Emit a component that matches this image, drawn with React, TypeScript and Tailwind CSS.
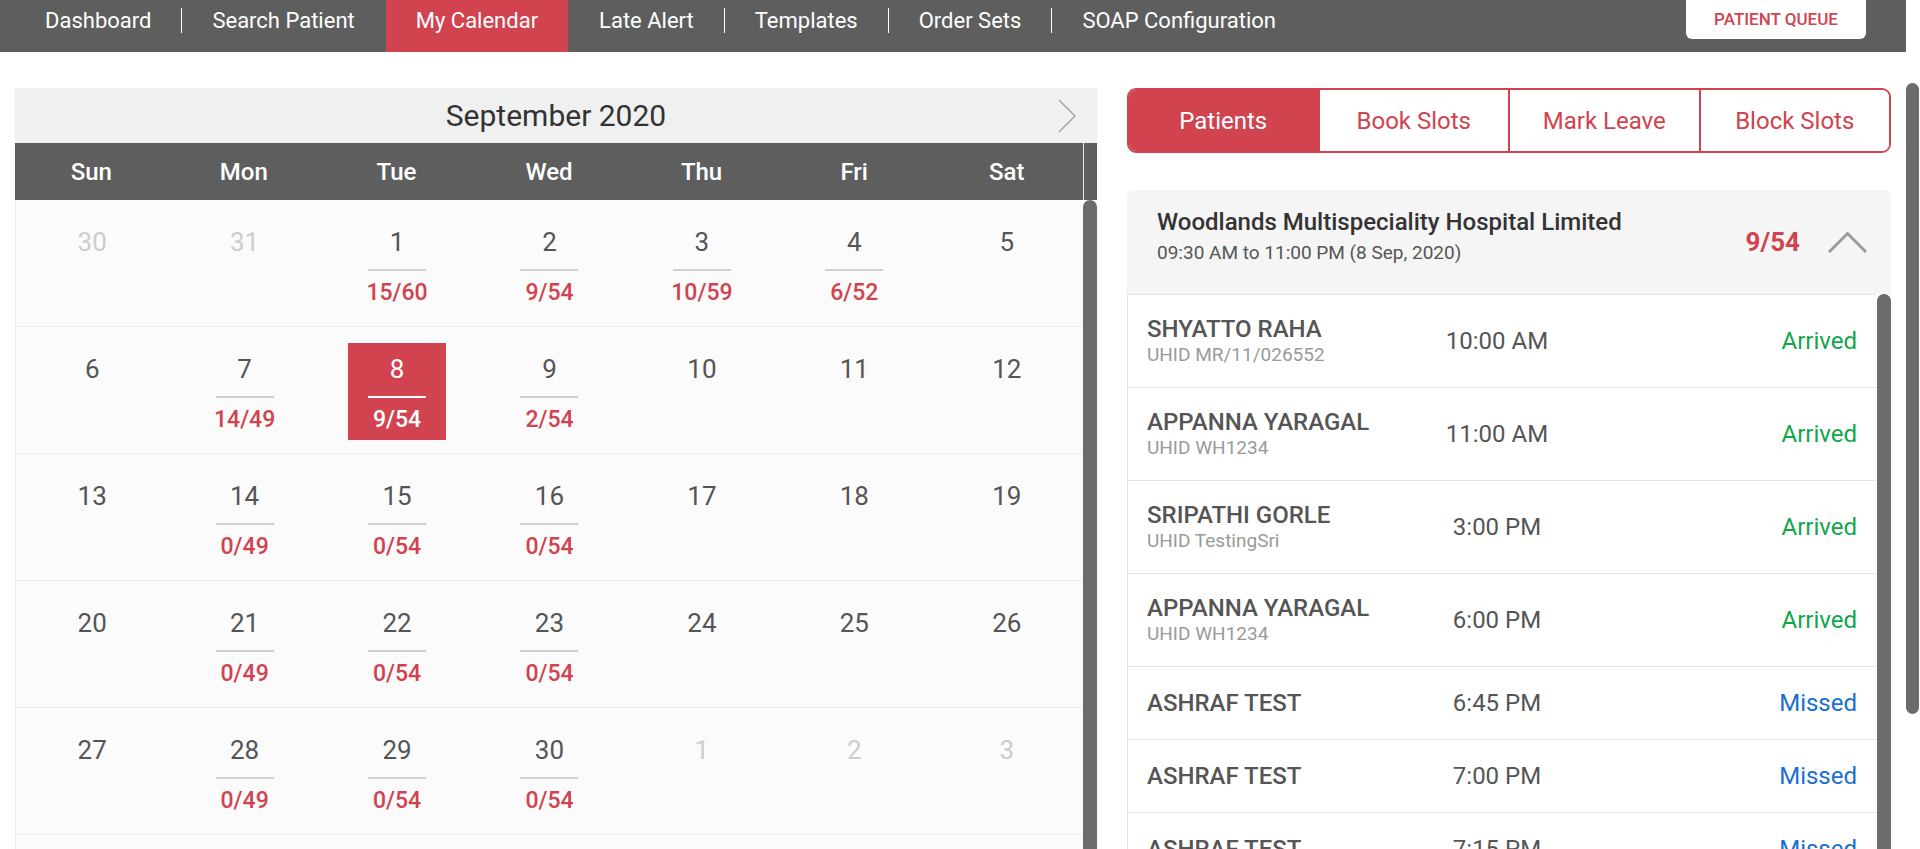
import React from "react";

type Day = { n: number; other?: boolean; count?: string; selected?: boolean };

const navItems = [
  "Dashboard",
  "Search Patient",
  "My Calendar",
  "Late Alert",
  "Templates",
  "Order Sets",
  "SOAP Configuration",
];

const weeks: Day[][] = [
  [
    { n: 30, other: true },
    { n: 31, other: true },
    { n: 1, count: "15/60" },
    { n: 2, count: "9/54" },
    { n: 3, count: "10/59" },
    { n: 4, count: "6/52" },
    { n: 5 },
  ],
  [
    { n: 6 },
    { n: 7, count: "14/49" },
    { n: 8, count: "9/54", selected: true },
    { n: 9, count: "2/54" },
    { n: 10 },
    { n: 11 },
    { n: 12 },
  ],
  [
    { n: 13 },
    { n: 14, count: "0/49" },
    { n: 15, count: "0/54" },
    { n: 16, count: "0/54" },
    { n: 17 },
    { n: 18 },
    { n: 19 },
  ],
  [
    { n: 20 },
    { n: 21, count: "0/49" },
    { n: 22, count: "0/54" },
    { n: 23, count: "0/54" },
    { n: 24 },
    { n: 25 },
    { n: 26 },
  ],
  [
    { n: 27 },
    { n: 28, count: "0/49" },
    { n: 29, count: "0/54" },
    { n: 30, count: "0/54" },
    { n: 1, other: true },
    { n: 2, other: true },
    { n: 3, other: true },
  ],
  [
    { n: 4, other: true },
    { n: 5, other: true },
    { n: 6, other: true },
    { n: 7, other: true },
    { n: 8, other: true },
    { n: 9, other: true },
    { n: 10, other: true },
  ],
];

const patients = [
  { name: "SHYATTO RAHA", uhid: "UHID MR/11/026552", time: "10:00 AM", status: "Arrived" },
  { name: "APPANNA YARAGAL", uhid: "UHID WH1234", time: "11:00 AM", status: "Arrived" },
  { name: "SRIPATHI GORLE", uhid: "UHID TestingSri", time: "3:00 PM", status: "Arrived" },
  { name: "APPANNA YARAGAL", uhid: "UHID WH1234", time: "6:00 PM", status: "Arrived" },
  { name: "ASHRAF TEST", time: "6:45 PM", status: "Missed" },
  { name: "ASHRAF TEST", time: "7:00 PM", status: "Missed" },
  { name: "ASHRAF TEST", time: "7:15 PM", status: "Missed" },
  { name: "ASHRAF TEST", time: "7:30 PM", status: "Missed" },
];

function TopNav() {
  const active = 2;
  return (
    <div className="flex h-[52px] shrink-0 items-stretch bg-[#5e5e5e] pl-[15px] pr-[40px]">
      {navItems.map((item, i) => (
        <React.Fragment key={item}>
          {i > 0 && (
            <div className="flex items-center pb-[12px]">
              <div
                className={
                  i === active || i === active + 1
                    ? "h-[25px] w-px bg-transparent"
                    : "h-[25px] w-px bg-white"
                }
              />
            </div>
          )}
          <div
            className={
              i === active
                ? "flex items-center bg-[#d0434f] px-[30px] pb-[12px] text-[22px] text-white"
                : "flex items-center px-[30px] pb-[12px] text-[22px] text-white"
            }
          >
            {item}
          </div>
        </React.Fragment>
      ))}
      <button className="ml-auto h-[39px] w-[180px] self-start rounded-b-md bg-white text-[17px] font-medium text-[#d0434f]">
        PATIENT QUEUE
      </button>
    </div>
  );
}

function Calendar() {
  return (
    <div className="flex w-[1082px] flex-col">
      <div className="grid h-[55px] grid-cols-[1fr_auto_1fr] items-center bg-[#eff0f0]">
        <div />
        <div className="text-[30px] text-[#333]">September 2020</div>
        <div className="flex justify-end pr-[21px]">
          <svg width="18" height="34" viewBox="0 0 18 34" fill="none">
            <polyline points="1,1 17,17 1,33" stroke="#9b9b9b" strokeWidth="1.2" />
          </svg>
        </div>
      </div>
      <div className="flex h-[57px] bg-[#5e5e5e]">
        <div className="grid flex-1 grid-cols-7 items-center">
          {["Sun", "Mon", "Tue", "Wed", "Thu", "Fri", "Sat"].map((d) => (
            <div key={d} className="text-center text-[24px] font-medium text-white">
              {d}
            </div>
          ))}
        </div>
        <div className="w-[14px] border-l border-[#e8e8e8]" />
      </div>
      <div className="flex">
        <div className="flex-1 border-l border-[#ececec] bg-[#fbfbfb]">
          {weeks.map((week, wi) => (
            <div key={wi} className="grid h-[127px] grid-cols-7 border-b border-[#ececec]">
              {week.map((day, di) => (
                <div key={di} className="flex flex-col items-center pt-4">
                  <div
                    className={
                      day.selected
                        ? "flex h-[97px] w-[98px] flex-col items-center bg-[#d0434f] pt-[10px]"
                        : "flex h-[97px] w-[98px] flex-col items-center pt-[10px]"
                    }
                  >
                    <div
                      className={
                        day.selected
                          ? "text-[26px] leading-[32px] text-white"
                          : day.other
                          ? "text-[26px] leading-[32px] text-[#cdcdcd]"
                          : "text-[26px] leading-[32px] text-[#555]"
                      }
                    >
                      {day.n}
                    </div>
                    {day.count && (
                      <>
                        <div
                          className={
                            day.selected
                              ? "mt-[11px] h-[2px] w-[58px] bg-white"
                              : "mt-[11px] h-[2px] w-[58px] bg-[#cfcfcf]"
                          }
                        />
                        <div
                          className={
                            day.selected
                              ? "mt-[8px] text-[23px] font-medium leading-[28px] text-white"
                              : "mt-[8px] text-[23px] font-medium leading-[28px] text-[#d0434f]"
                          }
                        >
                          {day.count}
                        </div>
                      </>
                    )}
                  </div>
                </div>
              ))}
            </div>
          ))}
        </div>
        <div className="w-[14px] rounded-t-full bg-[#6b6b6b]" />
      </div>
    </div>
  );
}

function PatientsPanel() {
  const tabs = ["Patients", "Book Slots", "Mark Leave", "Block Slots"];
  return (
    <div className="flex w-[764px] flex-col">
      <div className="flex h-[65px] overflow-hidden rounded-[9px] border-2 border-[#d0434f]">
        {tabs.map((t, i) => (
          <div
            key={t}
            className={
              i === 0
                ? "flex flex-1 items-center justify-center bg-[#d0434f] text-[24px] text-white"
                : "flex flex-1 items-center justify-center border-l-2 border-[#d0434f] bg-white text-[24px] text-[#d0434f]"
            }
          >
            {t}
          </div>
        ))}
      </div>

      <div className="mt-[37px] flex h-[104px] justify-between rounded-t-[6px] bg-[#f5f5f5] pl-[30px] pr-[24px]">
        <div className="pt-[17px]">
          <div className="text-[24px] font-medium leading-[30px] text-[#333]">
            Woodlands Multispeciality Hospital Limited
          </div>
          <div className="mt-[3px] text-[19px] leading-[26px] text-[#555]">
            09:30 AM to 11:00 PM (8 Sep, 2020)
          </div>
        </div>
        <div className="flex items-center gap-[28px]">
          <div className="text-[26px] font-bold text-[#d0434f]">9/54</div>
          <svg width="39" height="22" viewBox="0 0 39 22" fill="none">
            <polyline points="1,21 19.5,2.5 38,21" stroke="#9a9a9a" strokeWidth="3" />
          </svg>
        </div>
      </div>

      <div className="flex">
        <div className="flex-1 border-l border-t border-[#e3e3e3]">
          {patients.map((p, i) => (
            <div
              key={i}
              className={
                p.uhid
                  ? "flex h-[93px] items-center border-b border-[#e3e3e3] bg-white pl-[19px] pr-[19px]"
                  : "flex h-[73px] items-center border-b border-[#e3e3e3] bg-white pl-[19px] pr-[19px]"
              }
            >
              <div className="w-[250px]">
                <div className="text-[24px] font-medium leading-[28px] text-[#555]">{p.name}</div>
                {p.uhid && (
                  <div className="text-[19px] leading-[24px] text-[#9a9a9a]">{p.uhid}</div>
                )}
              </div>
              <div className="w-[200px] text-center text-[24px] text-[#555]">{p.time}</div>
              <div
                className={
                  p.status === "Arrived"
                    ? "flex-1 text-right text-[24px] text-[#10a64a]"
                    : "flex-1 text-right text-[24px] text-[#1a6fd1]"
                }
              >
                {p.status}
              </div>
            </div>
          ))}
        </div>
        <div className="ml-[1px] w-[14px] rounded-t-full bg-[#6b6b6b]" />
      </div>
    </div>
  );
}

export default function App() {
  return (
    <div className="flex h-screen overflow-hidden bg-white font-['Roboto','Liberation_Sans',sans-serif]">
      <div className="flex min-w-0 flex-1 flex-col">
        <TopNav />
        <div className="flex shrink-0 gap-[30px] px-[15px] pt-[36px]">
          <Calendar />
          <PatientsPanel />
        </div>
      </div>
      <div className="w-[14px] shrink-0">
        <div className="mt-[83px] h-[631px] w-[13px] rounded-full bg-[#6b6b6b]" />
      </div>
    </div>
  );
}
